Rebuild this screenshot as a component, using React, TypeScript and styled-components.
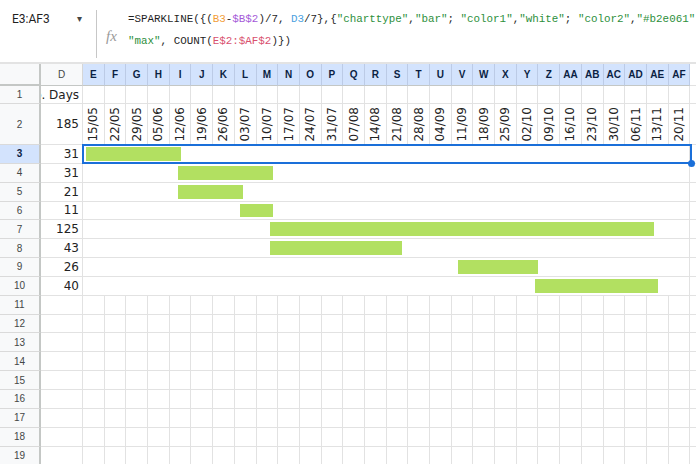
import styled, { createGlobalStyle } from "styled-components";

const TOTAL_DAYS = 28 * 7;

const letters = [
  "E", "F", "G", "H", "I", "J", "K", "L", "M", "N", "O", "P", "Q", "R",
  "S", "T", "U", "V", "W", "X", "Y", "Z", "AA", "AB", "AC", "AD", "AE", "AF",
];

const weekStart = Date.UTC(2023, 4, 15);
const weeks = letters.map((_, i) => {
  const d = new Date(weekStart + i * 7 * 864e5);
  const dd = String(d.getUTCDate()).padStart(2, "0");
  const mm = String(d.getUTCMonth() + 1).padStart(2, "0");
  return `${dd}/${mm}`;
});

const tasks = [
  { row: 3, start: 0, days: 31 },
  { row: 4, start: 30, days: 31 },
  { row: 5, start: 30, days: 21 },
  { row: 6, start: 50, days: 11 },
  { row: 7, start: 60, days: 125 },
  { row: 8, start: 60, days: 43 },
  { row: 9, start: 121, days: 26 },
  { row: 10, start: 146, days: 40 },
];

const emptyRows = [11, 12, 13, 14, 15, 16, 17, 18, 19];

const GlobalStyle = createGlobalStyle`
  html, body {
    margin: 0;
    padding: 0;
    background: #ffffff;
    overflow: hidden;
  }
  body {
    font-family: "Liberation Sans", Arial, sans-serif;
  }
`;

export default function App() {
  return (
    <Page>
      <GlobalStyle />
      <FormulaBar>
        <NameBox>
          <span>E3:AF3</span>
          <Caret>▾</Caret>
        </NameBox>
        <Divider />
        <FxIcon>fx</FxIcon>
        <FormulaText>
          <div>
            =SPARKLINE({"{("}
            <Ref $c="#f29d38">B3</Ref>-<Ref $c="#a45ad8">$B$2</Ref>)/7,{" "}
            <Ref $c="#4a9fe0">D3</Ref>/7{"},{"}
            <Str>"charttype"</Str>,<Str>"bar"</Str>; <Str>"color1"</Str>,<Str>"white"</Str>;{" "}
            <Str>"color2"</Str>,<Str>"#b2e061"</Str>
          </div>
          <div>
            <Str>"max"</Str>, COUNT(<Ref $c="#d9506e">E$2:$AF$2</Ref>){"})"}
          </div>
        </FormulaText>
      </FormulaBar>

      <Sheet>
        <Corner />
        <ColHeader>D</ColHeader>
        {letters.map((l) => (
          <ColHeader key={l} $active>
            {l}
          </ColHeader>
        ))}
        <Filler />

        <RowHeader>1</RowHeader>
        <ValueCell>No. Days</ValueCell>
        {letters.map((l) => (
          <Cell key={l} />
        ))}
        <Filler />

        <RowHeader>2</RowHeader>
        <ValueCell>185</ValueCell>
        {weeks.map((w) => (
          <DateCell key={w}>
            <DateText>{w}</DateText>
          </DateCell>
        ))}
        <Filler />

        {tasks.map((t) => (
          <Row key={t.row} task={t} />
        ))}

        {emptyRows.map((r) => (
          <EmptyRow key={r} row={r} />
        ))}
      </Sheet>
    </Page>
  );
}

function Row({ task }: { task: { row: number; start: number; days: number } }) {
  const selected = task.row === 3;
  return (
    <>
      <RowHeader $active={selected}>{task.row}</RowHeader>
      <ValueCell>{task.days}</ValueCell>
      <MergedCell $selected={selected}>
        <Track>
          <Gap style={{ width: `${(task.start / TOTAL_DAYS) * 100}%` }} />
          <Bar style={{ width: `${(task.days / TOTAL_DAYS) * 100}%` }} />
        </Track>
      </MergedCell>
      <Filler />
    </>
  );
}

function EmptyRow({ row }: { row: number }) {
  return (
    <>
      <RowHeader>{row}</RowHeader>
      <ValueCell />
      {letters.map((l) => (
        <Cell key={l} />
      ))}
      <Filler />
    </>
  );
}

const Page = styled.div`
  width: 696px;
  height: 464px;
  overflow: hidden;
  display: flex;
  flex-direction: column;
`;

const FormulaBar = styled.div`
  flex: none;
  display: flex;
  height: 62px;
  border-bottom: 2px solid #e3e3e3;
`;

const NameBox = styled.div`
  box-sizing: border-box;
  width: 96px;
  display: flex;
  justify-content: space-between;
  padding: 12px 14px 0 12px;
  font-family: Roboto, "Liberation Sans", sans-serif;
  font-size: 12px;
  line-height: 14px;
  color: #1f1f1f;
`;

const Caret = styled.span`
  font-size: 10px;
  color: #444746;
`;

const Divider = styled.div`
  width: 1px;
  margin: 10px 0 4px;
  background: #c7c7c7;
`;

const FxIcon = styled.div`
  width: 31px;
  box-sizing: border-box;
  padding: 28px 0 0 9px;
  font-family: "Liberation Serif", serif;
  font-style: italic;
  font-size: 15px;
  color: #9a9a9a;
`;

const FormulaText = styled.div`
  padding-top: 8px;
  font-family: "Liberation Mono", monospace;
  font-size: 10.86px;
  line-height: 22px;
  color: #1f1f1f;
  white-space: pre;
`;

const Ref = styled.span<{ $c: string }>`
  color: ${(p) => p.$c};
`;

const Str = styled.span`
  color: #2d8f3c;
`;

const Sheet = styled.div`
  display: grid;
  grid-template-columns: 41px 42px repeat(28, 21.7px) 1fr;
  grid-template-rows: 22px 18px 41px repeat(17, 18.85px);
  font-family: "DejaVu Sans", Verdana, sans-serif;
`;

const Cell = styled.div`
  box-sizing: border-box;
  min-width: 0;
  border-right: 1px solid #e2e2e2;
  border-bottom: 1px solid #e2e2e2;
`;

const Filler = styled(Cell)`
  border-right: none;
`;

const Corner = styled(Cell)`
  background: #f8f9fa;
  border-right: 2px solid #c4c7c5;
  border-bottom: 2px solid #c4c7c5;
`;

const ColHeader = styled(Cell)<{ $active?: boolean }>`
  display: flex;
  align-items: center;
  justify-content: center;
  font-family: "Liberation Sans", Arial, sans-serif;
  font-size: 10px;
  font-weight: ${(p) => (p.$active ? 700 : 400)};
  color: ${(p) => (p.$active ? "#0b1f44" : "#444746")};
  background: ${(p) => (p.$active ? "#d3e3fd" : "#f8f9fa")};
  border-right-color: ${(p) => (p.$active ? "#bccbe6" : "#d6d6d6")};
  border-bottom-color: #c4c7c5;
`;

const RowHeader = styled(Cell)<{ $active?: boolean }>`
  display: flex;
  align-items: center;
  justify-content: center;
  font-family: "Liberation Sans", Arial, sans-serif;
  font-size: 10px;
  font-weight: ${(p) => (p.$active ? 700 : 400)};
  color: ${(p) => (p.$active ? "#0b1f44" : "#444746")};
  background: ${(p) => (p.$active ? "#d3e3fd" : "#f8f9fa")};
  border-right: 2px solid #c4c7c5;
  border-bottom-color: #dadada;
`;

const ValueCell = styled(Cell)`
  display: flex;
  align-items: center;
  justify-content: flex-end;
  overflow: hidden;
  padding-right: 3px;
  white-space: nowrap;
  font-size: 12px;
  color: #222222;
`;

const DateCell = styled(Cell)`
  display: flex;
  align-items: flex-end;
  justify-content: center;
  overflow: hidden;
  padding-bottom: 2px;
`;

const DateText = styled.span`
  writing-mode: vertical-rl;
  transform: rotate(180deg);
  font-size: 12px;
  line-height: 1;
  color: #222222;
`;

const MergedCell = styled(Cell)<{ $selected?: boolean }>`
  grid-column: span 28;
  position: relative;
  z-index: ${(p) => (p.$selected ? 1 : 0)};
  display: flex;
  padding: 2px 1px 2px 3px;

  ${(p) =>
    p.$selected &&
    `
    &::after {
      content: "";
      position: absolute;
      top: -1px;
      left: -1px;
      right: -3px;
      bottom: -1px;
      border: 2px solid #1a6fd9;
      pointer-events: none;
    }
    &::before {
      content: "";
      position: absolute;
      right: -6px;
      bottom: -4px;
      width: 7px;
      height: 7px;
      border-radius: 50%;
      background: #1a6fd9;
      z-index: 2;
    }
  `}
`;

const Track = styled.div`
  flex: 1;
  display: flex;
`;

const Gap = styled.div`
  flex: none;
`;

const Bar = styled.div`
  flex: none;
  background: #b2e061;
`;
